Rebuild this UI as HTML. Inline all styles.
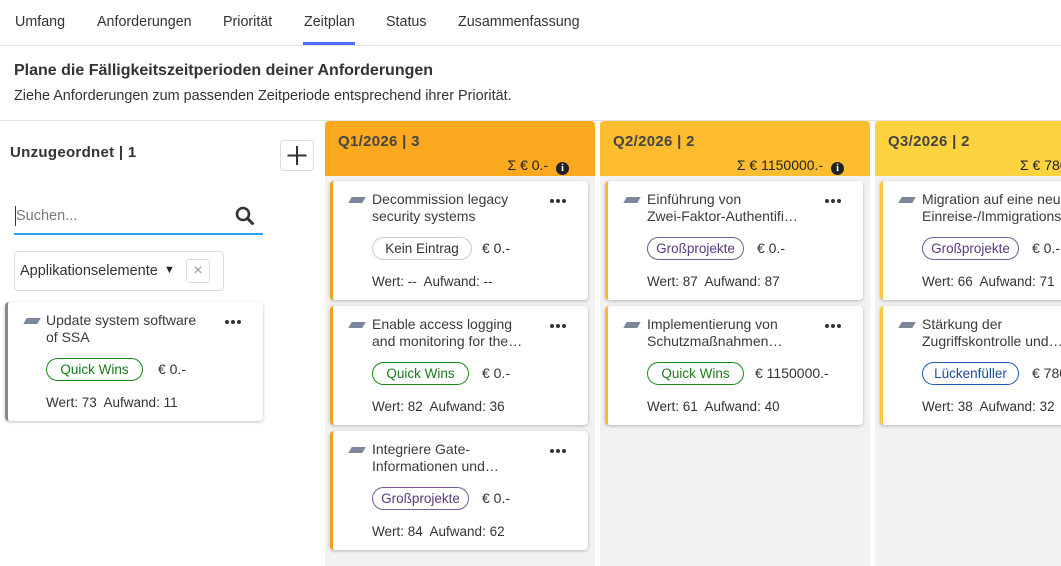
<!DOCTYPE html>
<html><head><meta charset="utf-8"><style>
*{box-sizing:border-box;margin:0;padding:0}
body{width:1061px;height:566px;overflow:hidden;background:#fff;font-family:"Liberation Sans",Arial,sans-serif;color:#333;position:relative}
.a{position:absolute}
.tab{position:absolute;top:14px;font-size:14.3px;color:#333}
.col{position:absolute;top:121px;width:270px;height:445px;background:#f2f2f2}
.hd{height:55px;border-radius:4px 4px 0 0;position:relative}
.hd b{position:absolute;left:13px;top:12px;font-size:15px;color:#444;letter-spacing:.3px}
.hd .s{position:absolute;right:26px;top:36px;font-size:14px;color:#222;white-space:nowrap}
.info{display:inline-block;width:13px;height:13px;border-radius:50%;background:#222;color:#fff;font-size:10px;font-weight:bold;text-align:center;line-height:13px;font-family:"Liberation Serif",serif;vertical-align:-1px;margin-left:4px}
.card{position:absolute;width:258px;height:119px;background:#fff;border-radius:4px;box-shadow:0 1px 3px rgba(0,0,0,.25);border-left:3px solid #f0a020}
.card .ic{position:absolute;left:17px;top:16px;width:14px;height:6px;background:#7d879c;transform:skewX(-30deg)}
.card .t{position:absolute;left:39px;top:10px;font-size:14px;line-height:17px;color:#3a3a3a;white-space:nowrap}
.card .dots{position:absolute;left:217px;top:18px}
.tag{position:absolute;left:39px;top:56px;height:23px;width:97px;text-align:center;border:1px solid #ccc;border-radius:12px;font-size:13.5px;line-height:21px;color:#333;white-space:nowrap}
.eur{position:absolute;top:59px;font-size:14px;color:#333;white-space:nowrap}
.w{position:absolute;left:39px;top:93px;font-size:13.5px;color:#333;white-space:nowrap}
.qw{border-color:#1a8a1a;color:#1a7a1a}
.gp{border-color:#7a5a9a;color:#5a3a80}
.lf{border-color:#1f5bb0;color:#1a4aa0}
</style></head><body>
<div class="tab" style="left:15px">Umfang</div>
<div class="tab" style="left:97px">Anforderungen</div>
<div class="tab" style="left:223px">Priorität</div>
<div class="tab" style="left:304px">Zeitplan</div>
<div class="tab" style="left:386px">Status</div>
<div class="tab" style="left:458px">Zusammenfassung</div>
<div class="a" style="left:303px;top:42px;width:52px;height:3px;background:#4a6cf7"></div>
<div class="a" style="left:0;top:45px;width:1061px;height:1px;background:#e3e3e3"></div>
<div class="a" style="left:14px;top:62px;font-size:16px;font-weight:bold;color:#333">Plane die Fälligkeitszeitperioden deiner Anforderungen</div>
<div class="a" style="left:14px;top:88px;font-size:14.4px;color:#333">Ziehe Anforderungen zum passenden Zeitperiode entsprechend ihrer Priorität.</div>
<div class="a" style="left:0;top:120px;width:1061px;height:1px;background:#e3e3e3"></div>

<div class="a" style="left:10px;top:144px;font-size:15px;font-weight:bold;color:#333;letter-spacing:.3px">Unzugeordnet | 1</div>
<div class="a" style="left:280px;top:140px;width:34px;height:31px;border:1px solid #ddd;border-radius:4px;background:#fff">
<svg width="32" height="29" viewBox="0 0 32 29"><path d="M16 5v19M6.5 14.5h19" stroke="#333" stroke-width="2"/></svg></div>
<div class="a" style="left:16px;top:208px;font-size:14.5px;color:#777">Suchen...</div>
<div class="a" style="left:15px;top:206px;width:1px;height:20px;background:#333"></div>
<svg class="a" style="left:235px;top:206px" width="20" height="20" viewBox="0 0 20 20"><circle cx="8" cy="8" r="6" fill="none" stroke="#333" stroke-width="2.6"/><path d="M12.5 12.5l5 5" stroke="#333" stroke-width="3" stroke-linecap="round"/></svg>
<div class="a" style="left:14px;top:233px;width:249px;height:2px;background:#27a3f0"></div>
<div class="a" style="left:14px;top:251px;width:210px;height:40px;border:1px solid #ddd;border-radius:4px"></div>
<div class="a" style="left:20px;top:263px;font-size:14.5px;color:#333">Applikationselemente</div>
<div class="a" style="left:164px;top:264px;font-size:11px;color:#222">▼</div>
<div class="a" style="left:186px;top:259px;width:24px;height:24px;border:1px solid #ddd;border-radius:3px;text-align:center;line-height:22px;color:#999;font-size:16px">×</div>

<svg width="0" height="0" style="position:absolute"><defs><g id="d"><circle cx="2" cy="2" r="2" fill="#333"/><circle cx="8" cy="2" r="2" fill="#333"/><circle cx="14" cy="2" r="2" fill="#333"/></g></defs></svg>

<div class="card" style="left:5px;top:302px;border-left-color:#888">
<div class="ic"></div><div class="t" style="left:38px">Update system software<br>of SSA</div><svg class="dots" width="16" height="4"><use href="#d"/></svg>
<div class="tag qw" style="left:38px">Quick Wins</div><div class="eur" style="left:150px">€ 0.-</div>
<div class="w" style="left:38px">Wert: 73&nbsp; Aufwand: 11</div></div>

<div class="col" style="left:325px"><div class="hd" style="background:#fca91f"><b>Q1/2026 | 3</b><div class="s">Σ € 0.- <span class="info">i</span></div></div></div>
<div class="col" style="left:600px"><div class="hd" style="background:#fdbd2e"><b>Q2/2026 | 2</b><div class="s">Σ € 1150000.- <span class="info">i</span></div></div></div>
<div class="col" style="left:875px;width:190px"><div class="hd" style="background:#fed340"><b>Q3/2026 | 2</b><div class="s" style="right:auto;left:145px">Σ € 780000.-</div></div></div>

<div class="card" style="left:330px;top:181px"><div class="ic"></div><div class="t">Decommission legacy<br>security systems</div><svg class="dots" width="16" height="4"><use href="#d"/></svg>
<div class="tag" style="width:100px">Kein Eintrag</div><div class="eur" style="left:149px">€ 0.-</div><div class="w">Wert: --&nbsp; Aufwand: --</div></div>
<div class="card" style="left:330px;top:306px"><div class="ic"></div><div class="t">Enable access logging<br>and monitoring for the…</div><svg class="dots" width="16" height="4"><use href="#d"/></svg>
<div class="tag qw">Quick Wins</div><div class="eur" style="left:149px">€ 0.-</div><div class="w">Wert: 82&nbsp; Aufwand: 36</div></div>
<div class="card" style="left:330px;top:431px"><div class="ic"></div><div class="t">Integriere Gate-<br>Informationen und…</div><svg class="dots" width="16" height="4"><use href="#d"/></svg>
<div class="tag gp">Großprojekte</div><div class="eur" style="left:149px">€ 0.-</div><div class="w">Wert: 84&nbsp; Aufwand: 62</div></div>

<div class="card" style="left:605px;top:181px;border-left-color:#fdb92a"><div class="ic"></div><div class="t">Einführung von<br>Zwei-Faktor-Authentifi…</div><svg class="dots" width="16" height="4"><use href="#d"/></svg>
<div class="tag gp">Großprojekte</div><div class="eur" style="left:149px">€ 0.-</div><div class="w">Wert: 87&nbsp; Aufwand: 87</div></div>
<div class="card" style="left:605px;top:306px;border-left-color:#fdb92a"><div class="ic"></div><div class="t">Implementierung von<br>Schutzmaßnahmen…</div><svg class="dots" width="16" height="4"><use href="#d"/></svg>
<div class="tag qw">Quick Wins</div><div class="eur" style="left:147px">€ 1150000.-</div><div class="w">Wert: 61&nbsp; Aufwand: 40</div></div>

<div class="card" style="left:880px;top:181px;border-left-color:#fdc93a"><div class="ic"></div><div class="t">Migration auf eine neue<br>Einreise-/Immigrationssystem</div>
<div class="tag gp">Großprojekte</div><div class="eur" style="left:149px">€ 0.-</div><div class="w">Wert: 66&nbsp; Aufwand: 71</div></div>
<div class="card" style="left:880px;top:306px;border-left-color:#fdc93a"><div class="ic"></div><div class="t">Stärkung der<br>Zugriffskontrolle und…</div>
<div class="tag lf">Lückenfüller</div><div class="eur" style="left:149px">€ 780000.-</div><div class="w">Wert: 38&nbsp; Aufwand: 32</div></div>
</body></html>
